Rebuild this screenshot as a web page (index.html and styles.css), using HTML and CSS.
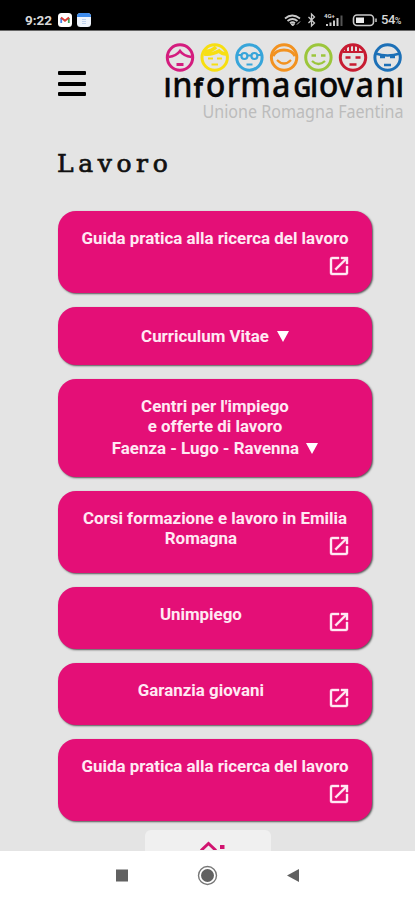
FILE: index.html
```html
<!DOCTYPE html>
<html lang="it">
<head>
<meta charset="utf-8">
<meta name="viewport" content="width=device-width, initial-scale=1">
<title>Informagiovani - Lavoro</title>
<link rel="stylesheet" href="styles.css">
</head>
<body>
<svg class="defs" width="0" height="0" aria-hidden="true">
  <symbol id="open" viewBox="0 0 24 24"><path fill="currentColor" stroke="currentColor" stroke-width=".4" d="M19 19H5V5h7V3H5a2 2 0 0 0-2 2v14a2 2 0 0 0 2 2h14c1.100 0 2-.9 2-2v-7h-2v7zM14 3v2h3.590l-9.830 9.830 1.410 1.410L19 6.410V10h2V3h-7z"/></symbol>
</svg>
<div class="status">
  <span class="time">9:22</span>
  <svg class="mail" width="14" height="14" viewBox="0 0 14 14"><rect width="14" height="14" rx="3.500" fill="#fff"/><path d="M3.200 10V5" stroke="#4b86e8" stroke-width="1.800"/><path d="M10.800 10V5" stroke="#3fa45b" stroke-width="1.800"/><path d="M3 4.500l4 3.300 4-3.300" fill="none" stroke="#dc3e35" stroke-width="1.900"/></svg>
  <svg class="cal" width="14" height="14" viewBox="0 0 14 14"><rect width="14" height="14" rx="3.500" fill="#eef4fc"/><path d="M0 4V3.500A3.500 3.500 0 0 1 3.500 0h7A3.500 3.500 0 0 1 14 3.500V4z" fill="#3f8cec"/><path d="M5 6.500h4M5 8.500h4M5 10.500h4" stroke="#bfd3ee"/></svg>
  <svg class="signals" width="94" height="16" viewBox="0 0 94 16" fill="none" stroke="#c9c9c9">
    <path d="M1 6.500q7-6 15 0M3.500 9q5-4 10 0M6 11.300q2.500-2 5 0" stroke-width="1.800"/><path d="M7 12l1.700 2 1.700-2zM13 12.500l3-3" fill="#c9c9c9"/>
    <path d="M24.500 5l6 6-3 3V2l3 3-6 6" stroke-width="1.300"/>
    <path d="M43 14v-2M46.500 14v-3.500M50 14V8.500M53.500 14V6" stroke-width="2"/><path d="M57.500 14V3.500" stroke="#555" stroke-width="2"/>
    <rect x="69.500" y="3" width="20" height="10.500" rx="3.500" stroke-width="1.600"/><rect x="72" y="5.500" width="8" height="5.500" fill="#eee" stroke="none"/><path d="M92 6.500v3.500" stroke-width="1.500"/>
    <text x="40" y="6" class="net">4G+</text>
  </svg>
  <span class="charge">54<small>%</small></span>
</div>
<main class="page">
  <header class="top">
    <button class="menu" aria-label="Menu"><i></i><i></i><i></i></button>
    <svg class="logo" width="244" height="84" viewBox="0 0 244 84" role="img" aria-label="Informagiovani">
      <g fill="none" stroke-width="3">
        <g stroke="#d41c7e"><circle cx="20" cy="17.500" r="12.700"/><path d="M8.500 17q8-1 11.500-6 3.500 5 11.500 6" stroke-width="2.600"/><path d="M16.500 24.500h7"/></g>
        <g stroke="#f7df12"><circle cx="54.700" cy="17.500" r="12.700"/><path d="M44 14q8 1 15-3 3 3 7 3M44 11q7 1 12-4" stroke-width="3.500"/><path d="M48 18.500h5M57 18.500h5M51.500 24.500h6.500" stroke-width="2.200"/></g>
        <g stroke="#37a5da"><circle cx="89.400" cy="17.500" r="12.700"/><circle cx="84.400" cy="16" r="3" stroke-width="2.200"/><circle cx="94.400" cy="16" r="3" stroke-width="2.200"/><path d="M77 15h4M87.400 15.500h4M98 15h4M86.500 24.500h6" stroke-width="2.200"/></g>
        <g stroke="#f29220"><circle cx="124.100" cy="17.500" r="12.700"/><path d="M113 16q3-6 11-6t11 6" stroke-width="2.800"/><path d="M117 20q7 7 14 0" stroke-width="2.200"/></g>
        <g stroke="#9cc63b"><circle cx="158.400" cy="17.500" r="12.700"/><path d="M151.500 15.500h4.500M161 15.500h4.500M152 21q6.400 6 13 0" stroke-width="2.300"/></g>
        <g stroke="#c71c32"><circle cx="193" cy="17.500" r="12.700"/><path d="M183 12h20M186 13V8M190 13V6M194 13V6M198 13V7" stroke-width="2"/><path d="M185.500 17.500h5M195.500 17.500h5M189.500 24.500h7" stroke-width="2.600"/></g>
        <g stroke="#1c70b7"><circle cx="227.600" cy="17.500" r="12.700"/><path d="M215.500 13.500q12 4 24.500 0" stroke-width="2.600"/><path d="M220 17h5M230 17h5M224 25h7" stroke-width="2.600"/></g>
      </g>
      <text class="word" transform="translate(.5 57.300) scale(.95 1)" x="3 12.400 35.400 47.700 69.800 84 117.400 139.500 157.200 166.600 185.800 205.300 226.500 247.500">ın<tspan class="small">f</tspan>ormaɢıovanı</text>
      <text class="sub" x="42.500" y="78" textLength="201" lengthAdjust="spacingAndGlyphs">Unione Romagna Faentina</text>
    </svg>
  </header>
  <h1>Lavoro</h1>
  <nav class="list">
    <a class="card tall"><span>Guida pratica alla ricerca del lavoro</span><svg><use href="#open"/></svg></a>
    <a class="card plain">Curriculum Vitae <b class="tri"></b></a>
    <a class="card group">Centri per l'impiego<br>e offerte di lavoro<br><span class="last">Faenza - Lugo - Ravenna <b class="tri"></b></span></a>
    <a class="card tall"><span>Corsi formazione e lavoro in Emilia<br>Romagna <em></em></span><svg><use href="#open"/></svg></a>
    <a class="card short"><span>Unimpiego <em></em></span><svg><use href="#open"/></svg></a>
    <a class="card short"><span>Garanzia giovani <em></em></span><svg><use href="#open"/></svg></a>
    <a class="card tall"><span>Guida pratica alla ricerca del lavoro</span><svg><use href="#open"/></svg></a>
  </nav>
  <div class="tab"><svg width="28" height="9" viewBox="0 0 28 9"><path d="M2 9.500l7.500-7 7.500 7" fill="none" stroke="#d11470" stroke-width="3"/><rect x="21" y="4" width="4.500" height="4" fill="#d11470"/></svg></div>
</main>
<footer class="keys">
  <svg width="415" height="49" viewBox="0 0 415 49" fill="#616161"><rect x="116" y="18.500" width="12" height="12"/><circle cx="207.500" cy="24.500" r="6.500"/><circle cx="207.500" cy="24.500" r="9" fill="none" stroke="#777" stroke-width="1.400"/><path d="M287 24.500l12-6.500v13z"/></svg>
</footer>
</body>
</html>
```
FILE: styles.css
```css
* { box-sizing: border-box; }
body { margin: 0; width: 415px; height: 900px; overflow: hidden; display: flex; flex-direction: column; background: #e4e4e4; font-family: Roboto, "Liberation Sans", sans-serif; }
.defs { position: absolute; }
.status { height: 31px; flex: none; background: #000; border-bottom: 1px solid #666; color: #d8d8d8; display: flex; align-items: center; padding: 9px 0 0 25px; }
.time { font-size: 13.500px; font-weight: 700; width: 33px; line-height: 20px; }
.cal { margin-left: 5px; }
.signals { margin-left: 193px; }
.net { font: 700 6px Roboto, sans-serif; fill: #ddd; stroke: none; }
.charge { font-size: 13px; font-weight: 500; margin-left: 3px; letter-spacing: -.5px; }
.charge small { font-size: 9px; }
.page { height: 820px; flex: none; overflow: hidden; }
.top { height: 97px; display: flex; justify-content: space-between; padding: 9px 11px 0 58px; }
.menu { width: 28px; height: 25px; margin-top: 31px; padding: 0; border: 0; background: none; display: flex; flex-direction: column; justify-content: space-between; }
.menu i { width: 28px; height: 4px; border-radius: 1px; background: #000; }
.logo { flex: none; overflow: visible; }
.word { font: 500 34px "Noto Sans", sans-serif; fill: #080808; stroke: #080808; stroke-width: .3px; }
.small { font-size: 25px; stroke-width: 1.300px; }
.sub { font: 400 17.500px "Noto Sans", sans-serif; fill: #bcbcbc; }
h1 { margin: 20px 0 0 57px; height: 63px; font: 400 25px/31px "DejaVu Serif", serif; letter-spacing: 4.600px; color: #111; -webkit-text-stroke: .7px #111; }
.list { margin: 0 43px 0 58px; display: grid; gap: 14px; }
.card { border-radius: 18px; background: #e40f77; box-shadow: 1px 1px 2px #555; color: #ffe9f3; font-size: 16.900px; font-weight: 700; line-height: 20px; text-align: center; display: flex; justify-content: center; }
.card svg { width: 24px; height: 24px; }
.tall { height: 82px; padding-top: 17px; position: relative; }
.tall svg { position: absolute; right: 21px; top: 43px; }
.short { height: 62px; padding-top: 17px; position: relative; }
.short svg { position: absolute; right: 21px; top: 23px; }
.card em { display: inline-block; width: 24px; }
.plain { height: 58px; align-items: center; }
.plain .tri { margin-left: 8px; }
.group { height: 98px; padding-top: 17px; display: block; }
.last { display: block; line-height: 24px; }
.tri { display: inline-block; border: 6px solid transparent; border-top: 11px solid #fff; border-bottom: 0; margin-left: 3px; }
.tab { width: 126px; height: 30px; margin: 9px 0 0 145px; padding: 11px 0 0 54px; border-radius: 6px; background: #f0f0f0; line-height: 0; }
.keys { height: 49px; flex: none; background: #fff; }
```
